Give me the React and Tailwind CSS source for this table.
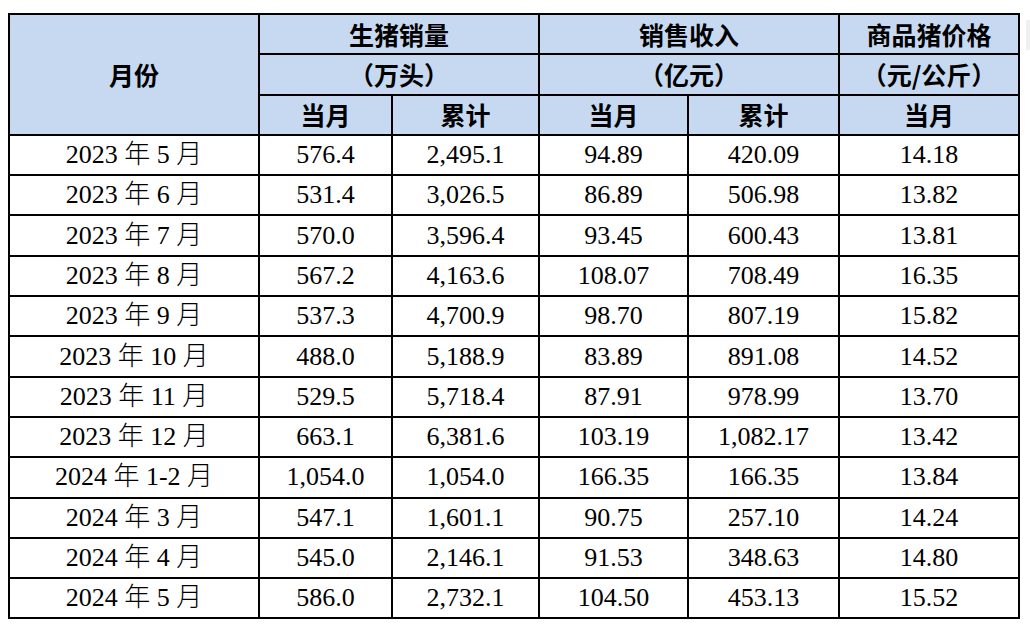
import React from 'react';

// 生猪销售简报表格
const rows = [
  ['2023 年 5 月', '576.4', '2,495.1', '94.89', '420.09', '14.18'],
  ['2023 年 6 月', '531.4', '3,026.5', '86.89', '506.98', '13.82'],
  ['2023 年 7 月', '570.0', '3,596.4', '93.45', '600.43', '13.81'],
  ['2023 年 8 月', '567.2', '4,163.6', '108.07', '708.49', '16.35'],
  ['2023 年 9 月', '537.3', '4,700.9', '98.70', '807.19', '15.82'],
  ['2023 年 10 月', '488.0', '5,188.9', '83.89', '891.08', '14.52'],
  ['2023 年 11 月', '529.5', '5,718.4', '87.91', '978.99', '13.70'],
  ['2023 年 12 月', '663.1', '6,381.6', '103.19', '1,082.17', '13.42'],
  ['2024 年 1-2 月', '1,054.0', '1,054.0', '166.35', '166.35', '13.84'],
  ['2024 年 3 月', '547.1', '1,601.1', '90.75', '257.10', '14.24'],
  ['2024 年 4 月', '545.0', '2,146.1', '91.53', '348.63', '14.80'],
  ['2024 年 5 月', '586.0', '2,732.1', '104.50', '453.13', '15.52'],
];

const th = 'border-2 border-black bg-[#c6d9f0] h-[40.3px] p-0 text-center align-middle font-bold text-[25px] leading-none';
const td = 'border-2 border-black h-[40.3px] p-0 text-center align-middle text-[26px] leading-none';

// 中文字用细体，和宋体的观感接近一点
const MonthText = ({ text }) =>
  text.split(/([年月])/).map((part, k) =>
    part === '年' || part === '月' ? (
      <span key={k} className="font-light">{part}</span>
    ) : (
      part
    )
  );

export default function App() {
  return (
    <div className="relative w-[1030px] h-[630px] bg-white pt-[13px] pl-[8px] text-black">
      <div className="absolute right-0 top-[20px] w-[4px] h-[30px] bg-[#f0f0f0]" />
      <table
        className="table-fixed border-collapse border-2 border-black w-[1010px]"
        style={{ fontFamily: '"Liberation Serif", "Noto Sans CJK SC", serif' }}
      >
        <colgroup>
          <col className="w-[250px]" />
          <col className="w-[133px]" />
          <col className="w-[147px]" />
          <col className="w-[149px]" />
          <col className="w-[151px]" />
          <col className="w-[180px]" />
        </colgroup>
        <thead style={{ fontFamily: '"Noto Sans CJK SC", sans-serif' }}>
          <tr>
            <th rowSpan={3} className={th}>月份</th>
            <th colSpan={2} className={th}>生猪销量</th>
            <th colSpan={2} className={th}>销售收入</th>
            <th className={th}>商品猪价格</th>
          </tr>
          <tr>
            <th colSpan={2} className={th}>（万头）</th>
            <th colSpan={2} className={th}>（亿元）</th>
            <th className={th}>（元/公斤）</th>
          </tr>
          <tr>
            <th className={th}>当月</th>
            <th className={th}>累计</th>
            <th className={th}>当月</th>
            <th className={th}>累计</th>
            <th className={th}>当月</th>
          </tr>
        </thead>
        <tbody>
          {rows.map((r, i) => (
            <tr key={i}>
              {r.map((c, j) => (
                <td key={j} className={td}>
                  {j === 0 ? <MonthText text={c} /> : c}
                </td>
              ))}
            </tr>
          ))}
        </tbody>
      </table>
    </div>
  );
}
